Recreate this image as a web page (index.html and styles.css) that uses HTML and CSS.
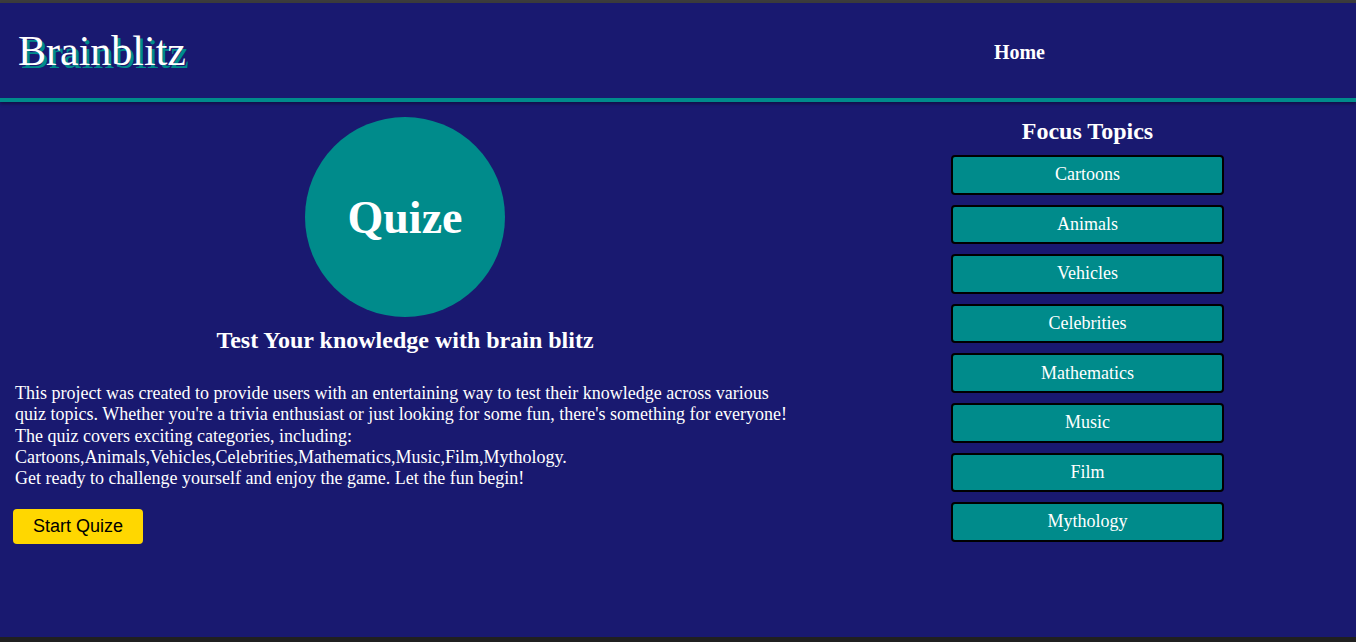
FILE: index.html
```html
<!DOCTYPE html>
<html lang="en">
<head>
<meta charset="utf-8">
<title>Brainblitz</title>
<link rel="stylesheet" href="styles.css">
</head>
<body>
<div class="page">
  <div class="top-strip"></div>
  <header class="site-header">
    <h1 class="logo">Brainblitz</h1>
    <nav class="nav"><a href="#" class="nav-link">Home</a></nav>
  </header>
  <main class="main">
    <section class="intro">
      <div class="circle"><span class="circle-text">Quize</span></div>
      <h2 class="tagline">Test Your knowledge with brain blitz</h2>
      <p class="desc">This project was created to provide users with an entertaining way to test their knowledge across various<br>quiz topics. Whether you're a trivia enthusiast or just looking for some fun, there's something for everyone!<br>The quiz covers exciting categories, including:<br>Cartoons,Animals,Vehicles,Celebrities,Mathematics,Music,Film,Mythology.<br>Get ready to challenge yourself and enjoy the game. Let the fun begin!</p>
      <button class="start-btn">Start Quize</button>
    </section>
    <aside class="topics">
      <h2 class="topics-title">Focus Topics</h2>
      <ul class="topic-list">
        <li class="topic">Cartoons</li>
        <li class="topic">Animals</li>
        <li class="topic">Vehicles</li>
        <li class="topic">Celebrities</li>
        <li class="topic">Mathematics</li>
        <li class="topic">Music</li>
        <li class="topic">Film</li>
        <li class="topic">Mythology</li>
      </ul>
    </aside>
  </main>
  <div class="bottom-strip"></div>
</div>
</body>
</html>
```

FILE: styles.css
```css
* { box-sizing: border-box; }
html, body {
  margin: 0;
  padding: 0;
  height: 100%;
}
body {
  background: #191970;
  color: #ffffff;
  font-family: "Liberation Serif", "Times New Roman", serif;
  font-size: 18px;
}
.page {
  display: flex;
  flex-direction: column;
  min-height: 100vh;
}
.top-strip {
  height: 3px;
  background: #3c3c3c;
}
.bottom-strip {
  height: 5px;
  background: #202020;
}
.site-header {
  height: 99px;
  display: flex;
  align-items: center;
  border-bottom: 4px solid #008b8b;
  box-shadow: 0 2px 3px rgba(0, 0, 0, 0.35);
  position: relative;
  z-index: 1;
}
.logo {
  margin: 0 0 0 18px;
  font-size: 42px;
  font-weight: normal;
  color: #ffffff;
  text-shadow: 3px 3px 0 #008b8b;
  line-height: 1;
}
.nav {
  margin-left: auto;
  margin-right: 311px;
  padding-top: 4px;
}
.nav-link {
  color: #ffffff;
  font-weight: bold;
  font-size: 20px;
  text-decoration: none;
}
.main {
  flex: 1;
  display: flex;
  align-items: flex-start;
}
.intro {
  width: 810px;
  display: flex;
  flex-direction: column;
  align-items: center;
}
.circle {
  margin-top: 15px;
  width: 200px;
  height: 200px;
  border-radius: 50%;
  background: #008b8b;
  display: flex;
  align-items: center;
  justify-content: center;
}
.circle-text {
  font-size: 46px;
  font-weight: bold;
}
.tagline {
  margin: 10px 0 0;
  font-size: 24px;
  font-weight: bold;
  line-height: 27px;
}
.desc {
  align-self: stretch;
  margin: 29px 0 0 15px;
  font-size: 18px;
  line-height: 21.3px;
  text-align: left;
}
.start-btn {
  align-self: flex-start;
  margin: 20px 0 0 13px;
  width: 130px;
  height: 35px;
  border: none;
  border-radius: 4px;
  background: #ffd700;
  color: #000000;
  font-family: "Liberation Sans", Arial, sans-serif;
  font-size: 18px;
  padding: 0;
}
.topics {
  margin-left: 141px;
  width: 273px;
}
.topics-title {
  margin: 16px 0 0;
  text-align: center;
  font-size: 24px;
  line-height: 27px;
  font-weight: bold;
}
.topic-list {
  list-style: none;
  margin: 10px 0 0;
  padding: 0;
  display: flex;
  flex-direction: column;
  gap: 10px;
}
.topic {
  background: #008b8b;
  border: 2px solid #000000;
  border-radius: 4px;
  height: 39.6px;
  display: flex;
  align-items: center;
  justify-content: center;
  font-size: 18px;
}
```
